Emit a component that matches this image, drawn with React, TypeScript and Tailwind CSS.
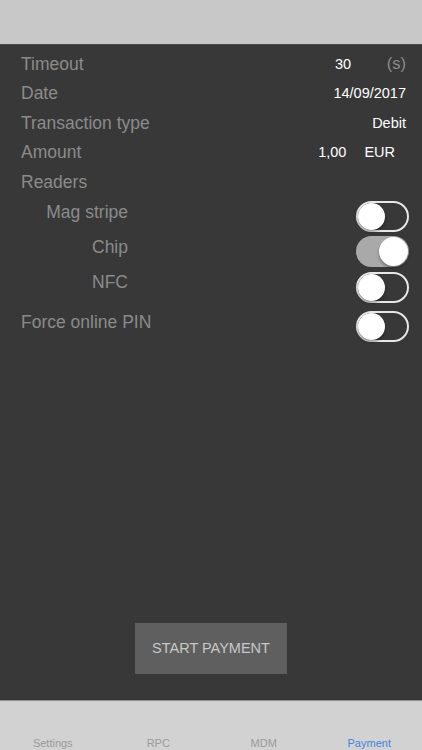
import React from "react";

function Toggle({ on }: { on?: boolean }) {
  return on ? (
    <div className="flex h-[31px] w-[53px] items-center justify-end rounded-full bg-[#a9a9a9] pr-[1px]">
      <div className="h-[29px] w-[29px] rounded-full bg-white shadow-[0_2px_3px_rgba(0,0,0,0.35)]" />
    </div>
  ) : (
    <div className="flex h-[31px] w-[53px] items-center rounded-full border-2 border-[#e8e8e8]">
      <div className="h-[27px] w-[27px] rounded-full bg-white shadow-[0_2px_3px_rgba(0,0,0,0.35)]" />
    </div>
  );
}

const label = "text-[17.5px] text-[#8b8b8b]";
const value = "mt-[2px] text-[14.5px] text-white";

export default function App() {
  return (
    <div
      className="flex h-[750px] w-[422px] flex-col bg-[#383838]"
      style={{ fontFamily: '"Liberation Sans", Arial, sans-serif' }}
    >
      <div className="h-[45px] border-b border-[#4a4a4a] bg-[#c8c8c8]" />

      <div className="flex flex-1 flex-col px-[21px] pt-[4px]">
        <div className="flex h-[29.5px] items-center">
          <span className={label}>Timeout</span>
          <span className={`${value} ml-auto w-[20px] text-center`}>30</span>
          <span className="ml-[29px] mr-[-5px] w-[24px] text-right text-[16.5px] text-[#8b8b8b]">(s)</span>
        </div>
        <div className="flex h-[29.5px] items-center justify-between">
          <span className={label}>Date</span>
          <span className={`${value} mr-[-5px]`}>14/09/2017</span>
        </div>
        <div className="flex h-[29.5px] items-center justify-between">
          <span className={label}>Transaction type</span>
          <span className={`${value} mr-[-5px]`}>Debit</span>
        </div>
        <div className="flex h-[29.5px] items-center">
          <span className={label}>Amount</span>
          <span className={`${value} ml-auto`}>1,00</span>
          <span className={`${value} ml-[18px] mr-[6px]`}>EUR</span>
        </div>
        <div className="flex h-[29.5px] items-center">
          <span className={label}>Readers</span>
        </div>

        <div className="mt-[2px] flex h-[35.5px] items-center justify-between">
          <span className={`${label} mb-[8px] w-[107px] text-right`}>Mag stripe</span>
          <div className="mr-[-8px]"><Toggle /></div>
        </div>
        <div className="flex h-[35.5px] items-center justify-between">
          <span className={`${label} mb-[9px] w-[107px] text-right`}>Chip</span>
          <div className="mr-[-8px]"><Toggle on /></div>
        </div>
        <div className="flex h-[35.5px] items-center justify-between">
          <span className={`${label} mb-[10px] w-[107px] text-right`}>NFC</span>
          <div className="mr-[-8px]"><Toggle /></div>
        </div>
        <div className="mt-[3.5px] flex h-[35.5px] items-center justify-between">
          <span className={`${label} mb-[8px]`}>Force online PIN</span>
          <div className="mr-[-8px]"><Toggle /></div>
        </div>

        <button className="mb-[26px] mt-auto flex h-[51px] w-[152px] items-center justify-center self-center bg-[#5f5f5f] text-[14.5px] text-[#c8c8c8]">
          START PAYMENT
        </button>
      </div>

      <div className="grid h-[50px] grid-cols-4 items-end border-t border-[#8e8e8e] bg-[#d2d2d2] text-center text-[11px] leading-[13px]">
        <span className="text-[#9a9a9a]">Settings</span>
        <span className="text-[#9a9a9a]">RPC</span>
        <span className="text-[#9a9a9a]">MDM</span>
        <span className="text-[#3d86e0]">Payment</span>
      </div>
    </div>
  );
}
